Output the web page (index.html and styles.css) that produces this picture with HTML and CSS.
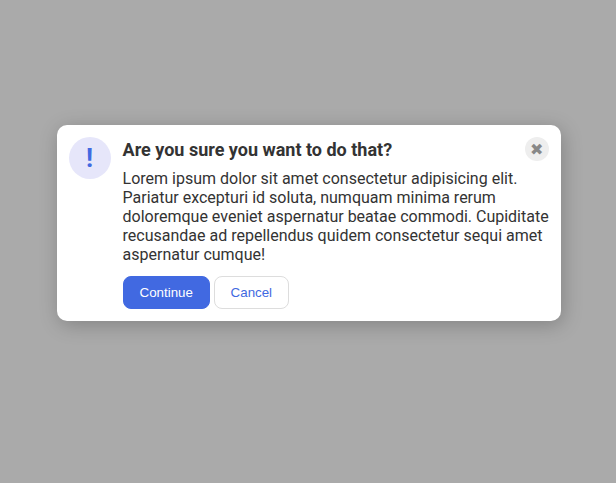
FILE: index.html
```html
<!DOCTYPE html>
<html lang="en">
<head>
<meta charset="utf-8">
<title>Confirm</title>
<link rel="stylesheet" href="styles.css">
</head>
<body>
<div class="modal">
  <div class="icon">!</div>
  <div class="container">
    <div class="header">
      <div class="title">Are you sure you want to do that?</div>
      <button class="close-button">✖</button>
    </div>
    <div class="text">Lorem ipsum dolor sit amet consectetur adipisicing elit. Pariatur excepturi id soluta, numquam minima rerum doloremque eveniet aspernatur beatae commodi. Cupiditate recusandae ad repellendus quidem consectetur sequi amet aspernatur cumque!</div>
    <div class="actions">
      <button class="continue">Continue</button>
      <button class="cancel">Cancel</button>
    </div>
  </div>
</div>
</body>
</html>
```
FILE: styles.css
```css
html, body {
  height: 100%;
}

body {
  margin: 0;
  font-family: Roboto, sans-serif;
  background: #aaa;
  color: #333;
  display: flex;
  align-items: center;
  justify-content: center;
}

.modal {
  box-sizing: border-box;
  width: 504.2px;
  margin: 0 0 37px 1.3px;
  padding: 12px;
  display: flex;
  gap: 12px;
  background: white;
  border-radius: 10px;
  box-shadow: 2px 4px 20px rgba(0, 0, 0, .23);
}

.icon {
  color: royalblue;
  font-size: 26px;
  font-weight: 700;
  background: lavender;
  width: 42px;
  height: 42px;
  border-radius: 50%;
  display: flex;
  align-items: center;
  justify-content: center;
  flex-shrink: 0;
}

.header {
  display: flex;
  align-items: center;
  justify-content: space-between;
  margin-bottom: 8px;
}

.title {
  font-size: 18px;
  font-weight: 700;
}

.close-button {
  background: #eee;
  border: 0;
  border-radius: 50%;
  color: #888;
  font: 400 16px Roboto, "DejaVu Sans", sans-serif;
  width: 24px;
  height: 24px;
  padding: 0;
}

.text {
  margin-bottom: 12px;
  line-height: 19px;
}

.actions {
  display: flex;
  gap: 3.7px;
}

.continue,
.cancel {
  font: 13.333px "Liberation Sans", Arial, sans-serif;
  padding: 8px 16px;
  border-radius: 8px;
  border: 1px solid royalblue;
}

.continue {
  background: royalblue;
  color: white;
}

.cancel {
  background: white;
  border-color: #ddd;
  color: royalblue;
}
```
